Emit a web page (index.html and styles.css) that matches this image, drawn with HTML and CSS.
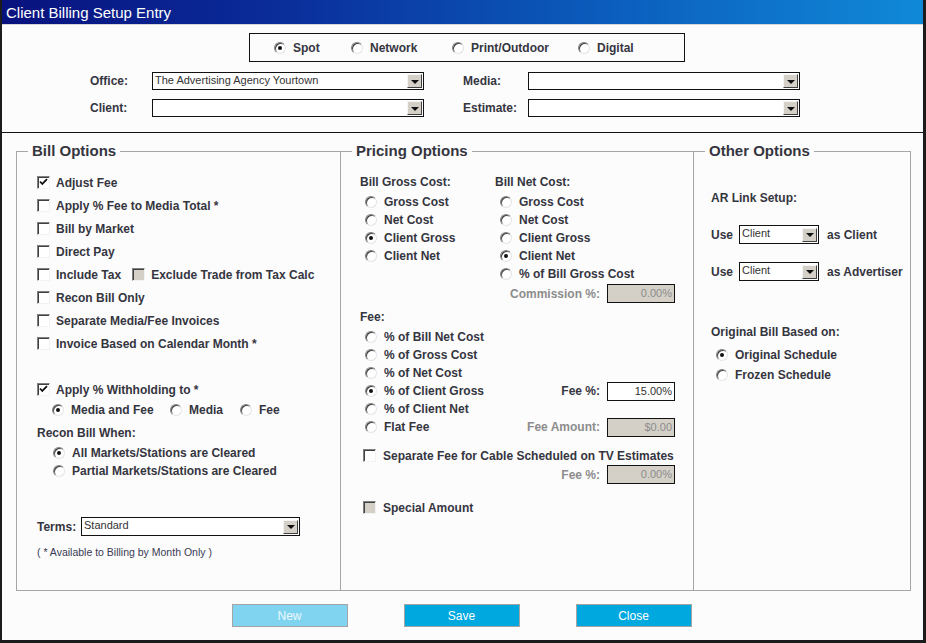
FILE: index.html
```html
<!DOCTYPE html>
<html lang="en">
<head>
    <meta charset="UTF-8">
    <title>Client Billing Setup Entry</title>
    <link rel="stylesheet" href="styles.css">
</head>
<body>
<div class="window">
    <div class="titlebar">Client Billing Setup Entry</div>

    <div class="header">
        <div class="media-box">
            <label class="opt"><span class="radio on"></span>Spot</label>
            <label class="opt"><span class="radio"></span>Network</label>
            <label class="opt"><span class="radio"></span>Print/Outdoor</label>
            <label class="opt"><span class="radio"></span>Digital</label>
        </div>

        <div class="fields">
            <span class="lbl">Office:</span>
            <div class="combo"><span class="val">The Advertising Agency Yourtown</span><span class="drop"></span></div>
            <span class="lbl far">Media:</span>
            <div class="combo"><span class="val"></span><span class="drop"></span></div>

            <span class="lbl">Client:</span>
            <div class="combo"><span class="val"></span><span class="drop"></span></div>
            <span class="lbl far">Estimate:</span>
            <div class="combo"><span class="val"></span><span class="drop"></span></div>
        </div>
    </div>

    <div class="main">
        <!-- Bill options -->
        <fieldset class="group">
            <legend>Bill Options</legend>
            <div class="gbody bill">
                <div class="crow"><span class="check on"><svg viewBox="0 0 11 11"><path d="M2 4.5 L4.3 7 L9 2.2"/></svg></span>Adjust Fee</div>
                <div class="crow"><span class="check"></span>Apply % Fee to Media Total *</div>
                <div class="crow"><span class="check"></span>Bill by Market</div>
                <div class="crow"><span class="check"></span>Direct Pay</div>
                <div class="crow"><span class="check"></span>Include Tax<span class="check off tax"></span>Exclude Trade from Tax Calc</div>
                <div class="crow"><span class="check"></span>Recon Bill Only</div>
                <div class="crow"><span class="check"></span>Separate Media/Fee Invoices</div>
                <div class="crow"><span class="check"></span>Invoice Based on Calendar Month *</div>

                <div class="crow withhold"><span class="check on"><svg viewBox="0 0 11 11"><path d="M2 4.5 L4.3 7 L9 2.2"/></svg></span>Apply % Withholding to *</div>
                <div class="wh-opts">
                    <label class="opt"><span class="radio on"></span>Media and Fee</label>
                    <label class="opt"><span class="radio"></span>Media</label>
                    <label class="opt"><span class="radio"></span>Fee</label>
                </div>

                <div class="line recon-title">Recon Bill When:</div>
                <div class="recon">
                    <label class="opt row"><span class="radio on"></span>All Markets/Stations are Cleared</label>
                    <label class="opt row"><span class="radio"></span>Partial Markets/Stations are Cleared</label>
                </div>

                <div class="terms">
                    <span class="terms-lbl">Terms:</span>
                    <div class="combo tall"><span class="val">Standard</span><span class="drop"></span></div>
                </div>
                <div class="note">( * Available to Billing by Month Only )</div>
            </div>
        </fieldset>

        <!-- Pricing options -->
        <fieldset class="group mid">
            <legend>Pricing Options</legend>
            <div class="gbody pricing">
                <div class="cost-cols">
                    <div>
                        <div class="line">Bill Gross Cost:</div>
                        <div class="rlist">
                            <label class="opt row"><span class="radio"></span>Gross Cost</label>
                            <label class="opt row"><span class="radio"></span>Net Cost</label>
                            <label class="opt row"><span class="radio on"></span>Client Gross</label>
                            <label class="opt row"><span class="radio"></span>Client Net</label>
                        </div>
                    </div>
                    <div>
                        <div class="line">Bill Net Cost:</div>
                        <div class="rlist">
                            <label class="opt row"><span class="radio"></span>Gross Cost</label>
                            <label class="opt row"><span class="radio"></span>Net Cost</label>
                            <label class="opt row"><span class="radio"></span>Client Gross</label>
                            <label class="opt row"><span class="radio on"></span>Client Net</label>
                            <label class="opt row"><span class="radio"></span>% of Bill Gross Cost</label>
                        </div>
                    </div>
                </div>
                <div class="frow commission">
                    <span class="dim">Commission %:</span>
                    <span class="num off">0.00%</span>
                </div>

                <div class="line fee-title">Fee:</div>
                <div class="rlist fee-list">
                    <label class="opt row"><span class="radio"></span>% of Bill Net Cost</label>
                    <label class="opt row"><span class="radio"></span>% of Gross Cost</label>
                    <label class="opt row"><span class="radio"></span>% of Net Cost</label>
                    <div class="split">
                        <label class="opt row"><span class="radio on"></span>% of Client Gross</label>
                        <span class="frow"><span>Fee %:</span><span class="num">15.00%</span></span>
                    </div>
                    <label class="opt row"><span class="radio"></span>% of Client Net</label>
                    <div class="split">
                        <label class="opt row"><span class="radio"></span>Flat Fee</label>
                        <span class="frow"><span class="dim">Fee Amount:</span><span class="num off">$0.00</span></span>
                    </div>
                </div>

                <div class="crow cable"><span class="check"></span>Separate Fee for Cable Scheduled on TV Estimates</div>
                <div class="frow cable-fee">
                    <span class="dim">Fee %:</span>
                    <span class="num off">0.00%</span>
                </div>

                <div class="crow special"><span class="check off"></span>Special Amount</div>
            </div>
        </fieldset>

        <!-- Other options -->
        <fieldset class="group mid">
            <legend>Other Options</legend>
            <div class="gbody other">
                <div class="line">AR Link Setup:</div>
                <div class="use-row">
                    <span class="use">Use</span>
                    <div class="combo tall small"><span class="val">Client</span><span class="drop"></span></div>
                    <span class="as">as Client</span>
                </div>
                <div class="use-row">
                    <span class="use">Use</span>
                    <div class="combo tall small"><span class="val">Client</span><span class="drop"></span></div>
                    <span class="as">as Advertiser</span>
                </div>

                <div class="line orig-title">Original Bill Based on:</div>
                <div class="orig">
                    <label class="opt row"><span class="radio on"></span>Original Schedule</label>
                    <label class="opt row"><span class="radio"></span>Frozen Schedule</label>
                </div>
            </div>
        </fieldset>
    </div>

    <div class="actions">
        <button class="btn disabled">New</button>
        <button class="btn">Save</button>
        <button class="btn">Close</button>
    </div>
</div>
</body>
</html>
```

FILE: styles.css
```css
* {
    box-sizing: border-box;
}

body {
    margin: 0;
    font-family: "Liberation Sans", Arial, sans-serif;
    font-size: 12px;
    font-weight: bold;
    color: #35353f;
    background: #fcfcfc;
}

.window {
    width: 926px;
    height: 643px;
    border-left: 2px solid #1c1c1c;
    border-right: 3px solid #1c1c1c;
    border-bottom: 3px solid #1c1c1c;
    background: #fcfcfc;
}

.titlebar {
    height: 25px;
    line-height: 26px;
    padding-left: 4px;
    font-size: 15px;
    font-weight: normal;
    color: #fff;
    background: linear-gradient(90deg, #08127e 0%, #0a2d9a 30%, #0b5cbc 65%, #1089d8 100%);
    border-bottom: 1px solid #d6d6d6;
}

/* top part: media type + combos */
.header {
    padding: 8px 0 15px;
    border-bottom: 1px solid #111;
}

.media-box {
    width: 436px;
    height: 29px;
    margin-left: 247px;
    border: 1px solid #111;
    padding-left: 24px;
    display: grid;
    grid-template-columns: 77px 101px 126px auto;
    align-items: center;
}

.fields {
    margin: 10px 0 0 88px;
    display: grid;
    grid-template-columns: 62px 272px 104px 272px;
    grid-auto-rows: 18px;
    row-gap: 9px;
    align-items: center;
}

.lbl.far {
    padding-left: 39px;
}

/* radios / checkboxes */
.opt {
    display: flex;
    align-items: center;
    gap: 7px;
    white-space: nowrap;
}

.opt.row {
    height: 18px;
}

.radio {
    position: relative;
    flex: none;
    width: 12px;
    height: 12px;
    border-radius: 50%;
    background: #fff;
    border: 1px solid;
    border-color: #808080 #e4e4e4 #e4e4e4 #808080;
    box-shadow: inset 1px 1px 0 #404040;
}

.radio.on::after {
    content: "";
    position: absolute;
    left: 3px;
    top: 3px;
    width: 4px;
    height: 4px;
    border-radius: 50%;
    background: #111;
}

.check {
    flex: none;
    width: 13px;
    height: 13px;
    background: #fff;
    border: 1px solid;
    border-color: #808080 #f2f2f2 #f2f2f2 #808080;
    box-shadow: inset 1px 1px 0 #404040;
    display: flex;
}

.check svg {
    width: 11px;
    height: 11px;
    fill: none;
    stroke: #111;
    stroke-width: 1.8;
}

.check.off {
    background: #d4d0c8;
}

.crow {
    display: flex;
    align-items: center;
    gap: 6px;
    height: 23px;
    white-space: nowrap;
}

.line {
    height: 18px;
    line-height: 18px;
}

.dim {
    color: #8c8c8c;
}

/* combo boxes */
.combo {
    display: flex;
    align-items: center;
    height: 18px;
    background: #fff;
    border: 1px solid #111;
}

.combo.tall {
    height: 19px;
}

.combo .val {
    flex: 1;
    align-self: flex-start;
    padding-left: 2px;
    font-size: 11px;
    font-weight: normal;
    line-height: 14px;
    color: #333;
}

.drop {
    flex: none;
    width: 15px;
    height: 14px;
    margin-right: 1px;
    background: #d4d0c8;
    border: 1px solid;
    border-color: #f4f4f4 #404040 #404040 #f4f4f4;
    display: flex;
    align-items: center;
    justify-content: center;
}

.drop::after {
    content: "";
    border-left: 4px solid transparent;
    border-right: 4px solid transparent;
    border-top: 4px solid #111;
    margin-top: 1px;
}

/* group boxes */
.main {
    padding: 10px 0 0 14px;
    display: grid;
    grid-template-columns: 325px 353px 217px;
    height: 458px;
}

.group {
    margin: 0;
    padding: 0;
    min-width: 0;
    border: 1px solid #a6a6a6;
}

.group.mid {
    border-left: none;
}

.group legend {
    margin-left: 11px;
    padding: 0 4px;
    font-size: 15px;
    line-height: 16px;
    color: #35353f;
}

.gbody.bill {
    padding: 12px 0 0 20px;
}

.crow .tax {
    margin-left: 5px;
}

.withhold {
    margin-top: 23px;
}

.wh-opts {
    height: 18px;
    padding-left: 15px;
    display: grid;
    grid-template-columns: 118px 70px auto;
    align-items: center;
}

.recon-title {
    margin-top: 5px;
}

.recon {
    margin-top: 2px;
    padding-left: 16px;
}

.terms {
    margin-top: 37px;
    display: flex;
    align-items: center;
}

.terms-lbl {
    width: 44px;
}

.terms .combo {
    width: 219px;
}

.note {
    margin-top: 8px;
    height: 16px;
    line-height: 16px;
    font-size: 10.5px;
    font-weight: normal;
    color: #3a3a55;
}

/* pricing */
.gbody.pricing {
    padding: 14px 18px 0 19px;
}

.cost-cols {
    display: grid;
    grid-template-columns: 135px auto;
}

.rlist {
    margin-top: 2px;
    padding-left: 5px;
}

.frow {
    display: flex;
    align-items: center;
    justify-content: flex-end;
    gap: 7px;
}

.num {
    width: 68px;
    height: 19px;
    border: 1px solid #111;
    background: #fff;
    padding-right: 2px;
    text-align: right;
    font-size: 11px;
    font-weight: normal;
    line-height: 17px;
    color: #333;
}

.num.off {
    background: #d4d0c8;
    color: #8c8c8c;
}

.commission {
    margin-top: 1px;
    height: 19px;
}

.fee-title {
    margin-top: 5px;
}

.split {
    display: flex;
    align-items: center;
    justify-content: space-between;
    height: 18px;
}

.cable {
    margin-top: 10px;
    height: 19px;
    padding-left: 3px;
    gap: 7px;
}

.cable-fee {
    height: 19px;
}

.special {
    margin-top: 14px;
    height: 19px;
    padding-left: 3px;
    gap: 7px;
}

/* other options */
.gbody.other {
    padding: 30px 0 0 17px;
}

.use-row {
    margin-top: 18px;
    height: 19px;
    display: flex;
    align-items: center;
}

.use {
    width: 28px;
}

.combo.small {
    width: 80px;
}

.as {
    margin-left: 8px;
}

.orig-title {
    margin-top: 42px;
}

.orig {
    margin-top: 4px;
    padding-left: 5px;
}

.orig .opt.row {
    height: 20px;
}

/* buttons */
.actions {
    margin-top: 13px;
    padding-right: 2px;
    display: flex;
    justify-content: center;
    gap: 56px;
}

.btn {
    width: 116px;
    height: 23px;
    padding: 0;
    border: 1px solid #a4a4a4;
    background: #00a8e0;
    color: #fff;
    font-family: "Liberation Sans", Arial, sans-serif;
    font-size: 12px;
    font-weight: normal;
}

.btn.disabled {
    background: #80d4f0;
    color: #eef8fc;
}
```
